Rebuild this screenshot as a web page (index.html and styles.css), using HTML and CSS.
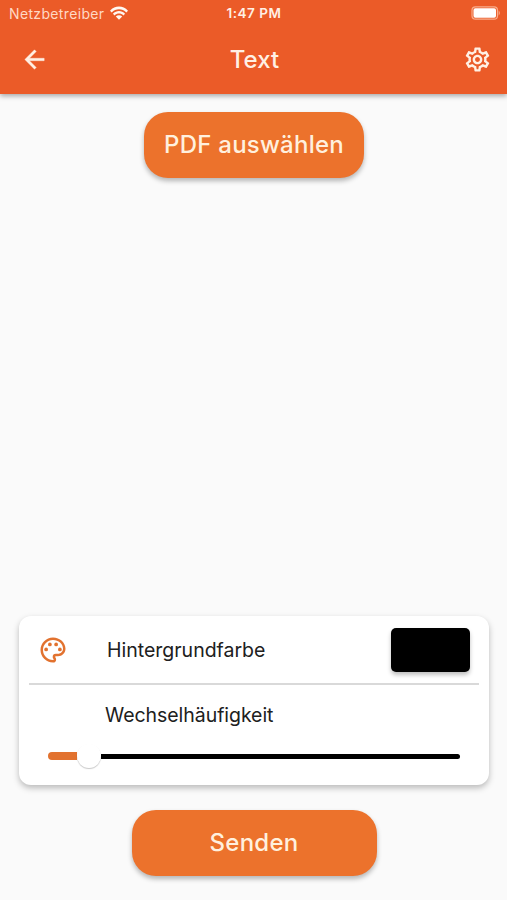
FILE: index.html
```html
<!DOCTYPE html>
<html lang="de">
<head>
<meta charset="utf-8">
<title>Text</title>
<link rel="stylesheet" href="styles.css">
</head>
<body>
<div class="screen">
  <header class="header">
    <div class="status">
      <div class="carrier"><span class="carrier-name">Netzbetreiber</span>
        <svg class="wifi" viewBox="0 0 18 14"><path d="M0 4.7C5-.8 13-.8 18 4.7L16.3 6.4C12.300 2.100 5.700 2.100 1.700 6.400ZM2.900 7.700C6.400 4 11.600 4 15.100 7.700L13.400 9.400C10.900 6.800 7.100 6.800 4.600 9.400ZM5.800 10.600C7.600 8.800 10.400 8.800 12.200 10.600L9 13.800Z"/></svg>
      </div>
      <span class="clock">1:47 PM</span>
      <svg class="battery" viewBox="0 0 30 14"><rect class="shell" x="1" y=".8" width="25.500" height="12.400" rx="3.500"/><rect x="2.500" y="2.300" width="22.500" height="9.400" rx="1.800"/><path class="cap" d="M27.700 4.500Q30 7 27.700 9.500Z"/></svg>
    </div>
    <div class="bar">
      <svg class="icon arrow" viewBox="0 0 24 24"><path d="M20 11H7.830l5.590-5.590L12 4l-8 8 8 8 1.410-1.410L7.830 13H20v-2z"/></svg>
      <h1 class="title">Text</h1>
      <svg class="icon" viewBox="0 0 24 24"><path d="M19.430 12.980c.04-.32.07-.64.07-.98 0-.34-.03-.66-.07-.98l2.110-1.650c.19-.15.24-.42.12-.64l-2-3.460c-.09-.16-.26-.25-.44-.25-.06 0-.12.010-.17.030l-2.490 1c-.52-.4-1.080-.73-1.690-.98l-.38-2.650C14.460 2.180 14.250 2 14 2h-4c-.25 0-.46.18-.49.42l-.38 2.650c-.61.25-1.170.59-1.690.98l-2.490-1c-.06-.02-.12-.03-.18-.03-.17 0-.34.09-.43.25l-2 3.460c-.13.22-.07.49.12.64l2.110 1.650c-.04.32-.07.65-.07.98 0 .33.030.66.070.98l-2.110 1.650c-.19.15-.24.42-.12.64l2 3.460c.09.16.26.25.44.25.06 0 .12-.01.17-.03l2.490-1c.52.4 1.080.73 1.690.98l.38 2.650c.03.24.24.42.49.42h4c.25 0 .46-.18.49-.42l.38-2.650c.61-.25 1.170-.59 1.690-.98l2.490 1c.06.020.12.030.18.030.17 0 .34-.09.43-.25l2-3.460c.12-.22.07-.49-.12-.64l-2.110-1.650zm-1.980-1.710c.04.31.050.52.050.73 0 .21-.02.43-.05.73l-.14 1.130.89.7 1.080.84-.7 1.210-1.270-.51-1.040-.42-.9.680c-.43.32-.84.56-1.250.73l-1.060.43-.16 1.130-.2 1.350h-1.400l-.19-1.350-.16-1.130-1.060-.43c-.43-.18-.83-.41-1.230-.71l-.91-.7-1.060.43-1.270.51-.7-1.210 1.080-.84.89-.7-.14-1.130c-.03-.31-.05-.54-.05-.74s.02-.43.050-.73l.14-1.130-.89-.7-1.080-.84.7-1.210 1.270.51 1.040.42.900-.68c.43-.32.84-.56 1.250-.73l1.060-.43.16-1.130.2-1.350h1.390l.19 1.350.16 1.130 1.060.43c.43.18.83.41 1.230.71l.91.7 1.060-.43 1.270-.51.7 1.210-1.070.85-.89.7.14 1.130zM12 8c-2.210 0-4 1.790-4 4s1.790 4 4 4 4-1.790 4-4-1.790-4-4-4zm0 6c-1.100 0-2-.9-2-2s.9-2 2-2 2 .9 2 2-.9 2-2 2z"/></svg>
    </div>
  </header>
  <main class="content">
    <button class="button pick">PDF auswählen</button>
    <section class="card">
      <div class="row">
        <svg class="palette" viewBox="0 0 24 24"><path d="M12 22C6.490 22 2 17.510 2 12S6.490 2 12 2s10 4.040 10 9c0 3.310-2.690 6-6 6h-1.770c-.28 0-.5.22-.5.5 0 .12.050.23.130.33.41.47.64 1.060.64 1.670A2.500 2.500 0 0 1 12 22zm0-18c-4.410 0-8 3.590-8 8s3.590 8 8 8c.28 0 .5-.22.5-.5a.54.54 0 0 0-.14-.35c-.41-.46-.63-1.050-.63-1.650a2.500 2.500 0 0 1 2.500-2.500H16c2.210 0 4-1.790 4-4 0-3.860-3.590-7-8-7z"/><circle cx="6.500" cy="11.500" r="1.500"/><circle cx="9.500" cy="7.500" r="1.500"/><circle cx="14.500" cy="7.500" r="1.500"/><circle cx="17.500" cy="11.500" r="1.500"/></svg>
        <span class="label">Hintergrundfarbe</span>
        <span class="swatch"></span>
      </div>
      <div class="frequency">
        <span class="label">Wechselhäufigkeit</span>
        <div class="slider"><span class="filled"></span><span class="thumb"></span><span class="rest"></span></div>
      </div>
    </section>
    <button class="button send">Senden</button>
  </main>
</div>
</body>
</html>
```

FILE: styles.css
```css
* { box-sizing: border-box; }
body { margin: 0; background: #fafafa; font-family: Inter, "Liberation Sans", sans-serif; color: #202020; }
.screen { height: 900px; display: flex; flex-direction: column; overflow: hidden; }
.header { height: 94px; flex: none; background: #eb5b28; color: #fff0e4; box-shadow: 0 2px 5px rgba(0,0,0,.34); }
.status { height: 26px; padding: 0 6px 0 9px; display: grid; grid-template-columns: 1fr auto 1fr; align-items: center; }
.carrier { display: flex; align-items: center; gap: 6px; }
.carrier-name { font-size: 14px; letter-spacing: .35px; color: #ffd9c4; }
.wifi { width: 18px; height: 14px; fill: #fff8f2; }
.clock { font-size: 13.500px; font-weight: 600; letter-spacing: .55px; margin-right: 2px; }
.battery { width: 30px; height: 14px; justify-self: end; fill: #fff; }
.battery .shell { fill: none; stroke: #f9ad8c; stroke-width: 1.2; }
.battery .cap { fill: #f9ad8c; }
.bar { height: 66px; padding: 0 15px 0 20px; display: flex; align-items: center; justify-content: space-between; }
.icon { width: 29px; height: 29px; fill: #fff0e4; }
.arrow { stroke: #fff0e4; stroke-width: .35; }
.title { margin: 0 3px 0 0; font-size: 24px; font-weight: 500; letter-spacing: 0; }
.content { flex: 1; display: flex; flex-direction: column; align-items: center; padding: 18px 18px 24px 19px; }
.button { border: 0; padding: 0 0 1px; height: 66px; border-radius: 24px; background: #ec722c; color: #fff0de; font: 500 24px Inter, "Liberation Sans", sans-serif; letter-spacing: .25px; box-shadow: 0 3px 5px rgba(0,0,0,.28); }
.pick { width: 220px; }
.send { width: 245px; margin-top: 25px; }
.card { width: 470px; height: 169px; margin-top: auto; padding: 0 10px; border-radius: 12px; background: #fff; box-shadow: 0 3px 6px rgba(0,0,0,.26); }
.row { height: 69px; display: flex; align-items: center; padding: 0 9px 0 9px; border-bottom: 2px solid #d9d9d9; }
.palette { width: 30px; height: 30px; fill: #e2722f; }
.label { font-size: 19.500px; line-height: 24px; }
.row .label { margin-left: 39px; }
.swatch { width: 79px; height: 44px; margin-left: auto; border-radius: 5px; background: #000; box-shadow: 0 3px 4px rgba(0,0,0,.25); }
.frequency { padding: 18px 19px 0; }
.frequency .label { display: block; margin-left: 57px; letter-spacing: -.05px; }
.slider { height: 26px; margin-top: 16px; display: flex; align-items: center; }
.filled { width: 29px; height: 8px; border-radius: 4px 0 0 4px; background: #e2722f; }
.thumb { width: 24px; height: 24px; border-radius: 50%; background: #fff; box-shadow: 0 1px 1px rgba(0,0,0,.22); }
.rest { flex: 1; height: 5px; border-radius: 0 3px 3px 0; background: #000; }
```
